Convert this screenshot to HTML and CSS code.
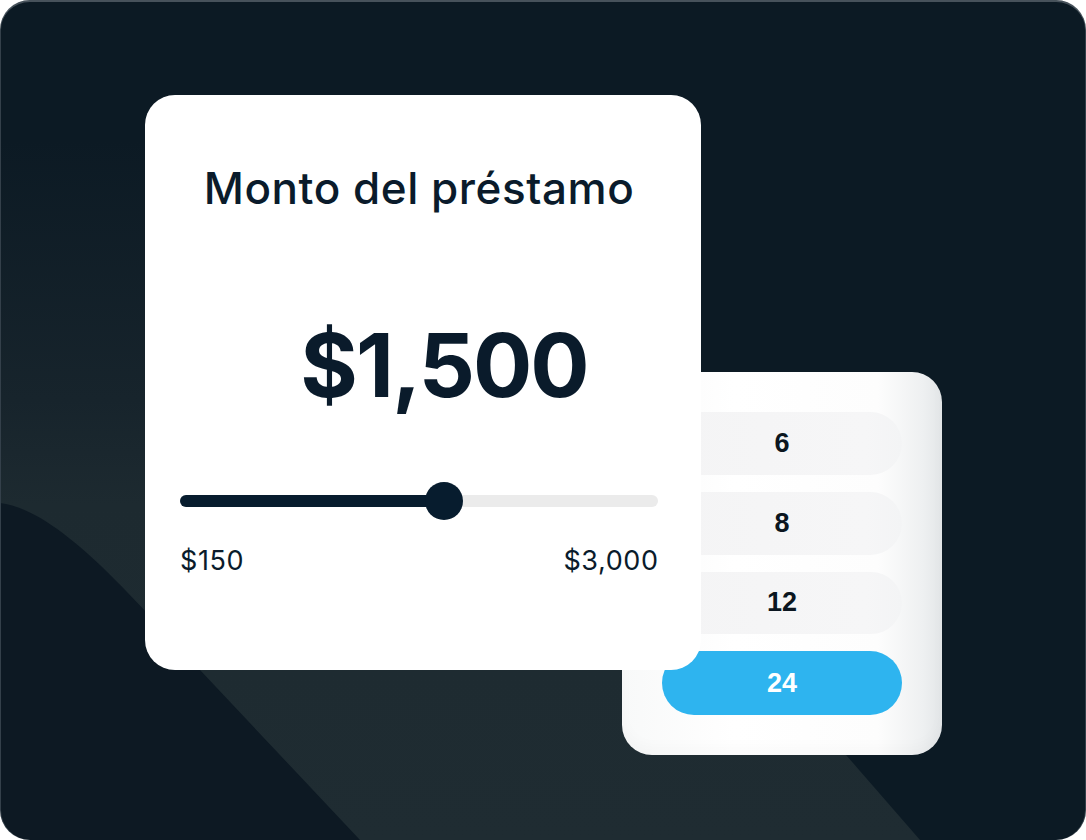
FILE: index.html
```html
<!DOCTYPE html>
<html lang="es">
<head>
<meta charset="utf-8">
<title>Monto del préstamo</title>
<link rel="stylesheet" href="styles.css">
</head>
<body>
<div class="frame">
  <section class="card amount-card">
    <h1 class="title">Monto del préstamo</h1>
    <div class="amount">$1,500</div>
    <div class="slider">
      <div class="track"><div class="fill" style="width:55.2%"></div></div>
      <div class="thumb" style="left:55.2%"></div>
    </div>
    <div class="range"><span>$150</span><span>$3,000</span></div>
  </section>
  <section class="card term-card">
    <div class="pill">6</div>
    <div class="pill">8</div>
    <div class="pill">12</div>
    <div class="pill pill-active">24</div>
  </section>
</div>
</body>
</html>
```
FILE: styles.css
```css
html, body {
  margin: 0;
  padding: 0;
  background: #ffffff;
}

.frame {
  width: 1086px;
  height: 840px;
  border-radius: 30px;
  overflow: hidden;
  background-color: #0c1a24;
  background-image: url("data:image/svg+xml,%3Csvg xmlns='http://www.w3.org/2000/svg' width='1086' height='840' viewBox='0 0 1086 840'%3E%3Cdefs%3E%3ClinearGradient id='g' gradientUnits='userSpaceOnUse' x1='0' y1='140' x2='0' y2='840'%3E%3Cstop offset='0' stop-color='%230c1a24'/%3E%3Cstop offset='0.37' stop-color='%2317242c'/%3E%3Cstop offset='0.52' stop-color='%231d2a30'/%3E%3Cstop offset='1' stop-color='%231f2c32'/%3E%3C/linearGradient%3E%3C/defs%3E%3Cpolygon points='0,100 276,100 920,840 0,840' fill='url(%23g)'/%3E%3Cpath d='M0,503 C60,510 136,602 200,670 L360,840 L0,840 Z' fill='%230d1923'/%3E%3C/svg%3E");
  background-repeat: no-repeat;
  background-size: 1086px 840px;
  box-shadow: inset 0 2px 0 #47525b, inset 1px 0 0 #34404a, inset -1px 0 0 #34404a;
  display: grid;
  grid-template-columns: 145px 477px 79px 241px 1fr;
  grid-template-rows: 95px 277px 298px 85px 1fr;
  font-family: Inter, "Noto Sans", sans-serif;
  color: #0a1b2b;
}

.card {
  border-radius: 30px;
  box-sizing: border-box;
}

.amount-card {
  grid-column: 2 / 4;
  grid-row: 2 / 4;
  background: #ffffff;
  z-index: 2;
  display: flex;
  flex-direction: column;
  padding: 0 43px 0 35px;
}

.title {
  margin: 67px 0 0;
  font-size: 44px;
  line-height: 52px;
  font-weight: 500;
  text-align: center;
  letter-spacing: 0.55px;
}

.amount {
  margin-top: 107px;
  padding-left: 50px;
  font-size: 88px;
  line-height: 88px;
  font-weight: 700;
  text-align: center;
  letter-spacing: -2px;
}

.slider {
  position: relative;
  margin-top: 73px;
  height: 38px;
  display: flex;
  align-items: center;
}

.track {
  flex: 1;
  height: 12px;
  border-radius: 6px;
  background: #ebebeb;
  display: flex;
}

.fill {
  height: 100%;
  border-radius: 6px;
  background: #071c2e;
}

.thumb {
  position: absolute;
  top: 0;
  width: 38px;
  height: 38px;
  border-radius: 50%;
  background: #071c2e;
  transform: translateX(-50%);
}

.range {
  margin-top: 25px;
  display: flex;
  justify-content: space-between;
  font-size: 27px;
  line-height: 32px;
  font-weight: 400;
  letter-spacing: 0.6px;
}

.range span:last-child {
  margin-right: -0.6px;
}

.term-card {
  grid-column: 3 / 5;
  grid-row: 3 / 5;
  z-index: 1;
  padding: 40px;
  display: flex;
  flex-direction: column;
  gap: 17px;
  background: linear-gradient(90deg, #f8f9f9 0%, #ffffff 35%, #fdfdfd 80%, #eef0f1 94%, #e3e6e8 100%);
  box-shadow: inset 0 -8px 14px rgba(0, 0, 0, 0.025);
}

.pill {
  height: 63px;
  border-radius: 32px;
  background: linear-gradient(90deg, #f4f4f5 0%, #f6f6f7 85%, #f3f4f5 100%);
  display: flex;
  align-items: center;
  justify-content: center;
  font-family: "Liberation Sans", Arial, sans-serif;
  font-weight: 700;
  font-size: 27px;
  color: #0b1620;
}

.pill-active {
  height: 64px;
  background: #2eb4ef;
  color: #ffffff;
}
```
